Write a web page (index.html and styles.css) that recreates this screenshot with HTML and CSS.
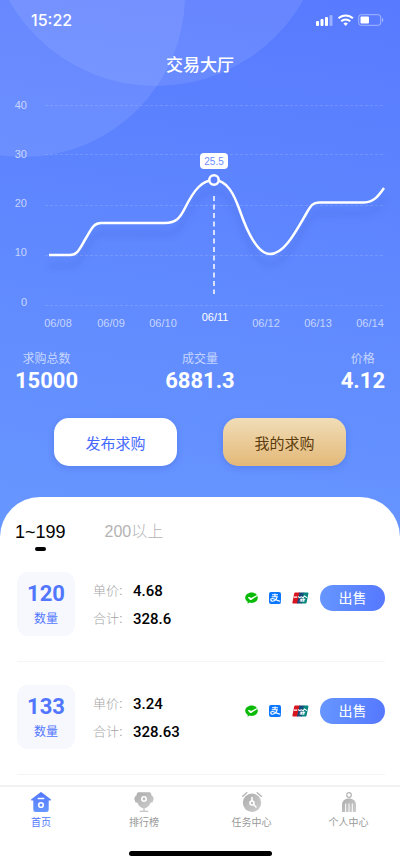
FILE: index.html
```html
<!DOCTYPE html>
<html lang="zh-CN">
<head>
<meta charset="utf-8">
<meta name="viewport" content="width=device-width, initial-scale=1">
<title>交易大厅</title>
<link rel="stylesheet" href="styles.css">
</head>
<body>
<svg class="defs" width="0" height="0" aria-hidden="true">
  <defs>
    <linearGradient id="blue" x1="0" y1="0" x2="0" y2="1"><stop offset="0" stop-color="#5377ff"/><stop offset="1" stop-color="#6797ff"/></linearGradient>
    <linearGradient id="gray" x1="0" y1="0" x2="1" y2="1"><stop offset="0" stop-color="#acacac"/><stop offset="1" stop-color="#cecece"/></linearGradient>
    <symbol id="wechat" viewBox="0 0 13 12">
      <path fill="#09bb07" d="M6.6.4C10 .4 12.800 2.700 12.800 5.700s-2.700 5.200-6.200 5.200c-.7 0-1.400-.1-2-.3L2.500 11.800l.3-1.900C1.200 8.900.2 7.400.2 5.700.2 2.700 3.100.4 6.600.4z"/>
      <path fill="#fff" d="M3.300 5.200c.3-.3.7-.3 1.100-.1l1.200.7c.3.200.6.200 1 0L12 3l.4.900-6.100 4c-.5.300-1 .3-1.400-.1L3.200 6.100c-.2-.3-.2-.6.100-.9z"/>
    </symbol>
    <symbol id="alipay" viewBox="0 0 12 12">
      <rect width="12" height="12" rx="2" fill="#0b77ff"/>
      <path d="M3 2.800h6M6 1.400v3.200M2.700 4.700h6.200M8.200 4.700C7.500 7 5.800 9.200 3.700 9.200 1.100 9.200 1.200 6.500 3.300 6.500 5.300 6.500 7 8.300 11.300 9.300" fill="none" stroke="#fff" stroke-width="1.100"/>
    </symbol>
    <symbol id="unionpay" viewBox="0 0 17 12">
      <path fill="#d8141f" d="M3.200.5h5L5.800 11.500H1.200Q.2 11.500.4 10.500L2.200 1.500Q2.400.5 3.200.5z"/>
      <path fill="#164a7a" d="M7.400.5h5L10 11.500H5z"/>
      <path fill="#078580" d="M11.700.5h4Q16.600.5 16.400 1.500L14.600 10.500Q14.400 11.500 13.500 11.500H9.300z"/>
      <path d="M1.700 5.100h3.500M6 4.400l1.500 1.200 2-.8 1.600 1 1.400-1.800 2.500 1.600M8.200 7.300h5M7.700 9h4.800M9.500 6.600l-.5 3M12 6.600l-.5 3" fill="none" stroke="#fff" stroke-width="1.100"/>
    </symbol>
  </defs>
</svg>

<header class="hero">
  <svg class="hero-art" width="310" height="160" viewBox="0 0 310 160" aria-hidden="true">
    <circle cx="156" cy="-83" r="169"/>
    <circle cx="23" cy="-5" r="162"/>
  </svg>

  <div class="status">
    <time>15:22</time>
    <svg width="68" height="14" viewBox="0 0 68 14" fill="#fff" aria-hidden="true">
      <rect x="0" y="8" width="3" height="5" rx="1"/><rect x="4.500" y="6" width="3" height="7" rx="1"/><rect x="9" y="4" width="3" height="9" rx="1"/><rect x="13.500" y="2" width="3" height="11" rx="1" opacity=".4"/>
      <g fill="none" stroke="#fff" stroke-width="2"><path d="M22.500 5.300a10.500 10.500 0 0 1 14.400 0"/><path d="M25.200 8.200a6.500 6.500 0 0 1 9 0"/></g>
      <path d="M27.500 10.600a3.300 3.300 0 0 1 4.400 0L29.700 13z"/>
      <rect x="42.700" y="1.700" width="22" height="10.600" rx="2.500" fill="none" stroke="#fff" opacity=".45"/>
      <rect x="44.500" y="3.500" width="8.500" height="7" rx="1"/><path d="M66 5v4q1.300-.6 1.300-2T66 5z" opacity=".5"/>
    </svg>
  </div>

  <h1>交易大厅</h1>

  <svg class="chart" viewBox="0 85 400 250" role="img" aria-label="价格走势">
    <g class="grid"><path d="M45 105.500H384M45 154.500H384M45 205.500H384M45 255.500H384M45 305.500H384"/></g>
    <g class="axis" text-anchor="end">
      <text x="27" y="109">40</text><text x="27" y="158">30</text><text x="27" y="207">20</text><text x="27" y="256">10</text><text x="27" y="306">0</text>
    </g>
    <path class="line" d="M49 255H70C78 255 80 248 86 238C92 228 94 223 101 223H165C176 223 180 218 185 208C194 190 202 180 214 180C227 180 234 194 240 211C248 234 258 254 270 254C284 254 295 233 306 214C311 205 313 202.500 319 202.500H364C374 202.500 379 195 384 188"/>
    <path class="marker" d="M214 196V294"/>
    <circle class="dot" cx="214" cy="180" r="4.700"/>
    <rect x="200" y="153" width="28" height="16" rx="4" fill="#fff"/>
    <text class="tip" x="214" y="165" text-anchor="middle">25.5</text>
    <g class="axis" text-anchor="middle">
      <text x="58" y="327">06/08</text><text x="111" y="327">06/09</text><text x="163" y="327">06/10</text>
      <text class="current" x="215" y="321">06/11</text>
      <text x="266" y="327">06/12</text><text x="318" y="327">06/13</text><text x="370" y="327">06/14</text>
    </g>
  </svg>

  <dl class="stats">
    <div><dt>求购总数</dt><dd>15000</dd></div>
    <div><dt>成交量</dt><dd>6881.3</dd></div>
    <div><dt>价格</dt><dd>4.12</dd></div>
  </dl>

  <div class="actions">
    <button type="button" class="action">发布求购</button>
    <button type="button" class="action gold">我的求购</button>
  </div>
</header>

<main class="sheet">
  <div class="tabs">
    <button type="button" class="tab active">1~199</button>
    <button type="button" class="tab">200以上</button>
  </div>
  <ul class="orders">
    <li class="order">
      <div class="amount"><strong>120</strong><span>数量</span></div>
      <dl class="prices"><dt>单价:</dt><dd>4.68</dd><dt>合计:</dt><dd>328.6</dd></dl>
      <div class="sale">
        <svg width="13" height="12" role="img" aria-label="微信支付"><use href="#wechat"/></svg>
        <svg width="12" height="12" role="img" aria-label="支付宝"><use href="#alipay"/></svg>
        <svg width="17" height="12" role="img" aria-label="银联"><use href="#unionpay"/></svg>
        <button type="button" class="sell">出售</button>
      </div>
    </li>
    <li class="order">
      <div class="amount"><strong>133</strong><span>数量</span></div>
      <dl class="prices"><dt>单价:</dt><dd>3.24</dd><dt>合计:</dt><dd>328.63</dd></dl>
      <div class="sale">
        <svg width="13" height="12" role="img" aria-label="微信支付"><use href="#wechat"/></svg>
        <svg width="12" height="12" role="img" aria-label="支付宝"><use href="#alipay"/></svg>
        <svg width="17" height="12" role="img" aria-label="银联"><use href="#unionpay"/></svg>
        <button type="button" class="sell">出售</button>
      </div>
    </li>
  </ul>
</main>

<nav class="tabbar">
  <div class="nav-items">
    <a href="#home" class="current">
      <svg width="22" height="20" viewBox="0 0 22 20" aria-hidden="true"><path fill="url(#blue)" d="M10.200.4q.8-.6 1.600 0L20.700 7.300q1 1-.3 1.300H18.700V17.500Q18.700 20 16.200 20H5.800Q3.300 20 3.300 17.500V8.600H1.600Q.3 8.300 1.300 7.300z"/><path d="M8.300 6.500h5.400" stroke="#fff" stroke-width="1.500" stroke-linecap="round"/><circle cx="11" cy="13" r="2.300" fill="none" stroke="#fff" stroke-width="1.600"/></svg>
      首页
    </a>
    <a href="#ranking">
      <svg width="22" height="20" viewBox="0 0 22 20" aria-hidden="true"><path fill="url(#gray)" d="M5.500.3H16.500Q17.800.3 18.200 2L18.600 3.700H19.300L20.800 6.500 19.500 10.500H17.800C16.500 13.500 14 16.300 11 16.300 8 16.300 5.500 13.500 4.200 10.500H2.500L1.200 6.500 2.700 3.700H3.400L3.800 2Q4.200.3 5.500.3z"/><path d="M11 15.500V19M6.700 19.300h8.600" stroke="#c5c5c5" stroke-width="1.300"/><circle cx="11" cy="7" r="2.200" fill="none" stroke="#fff" stroke-width="1.600"/></svg>
      排行榜
    </a>
    <a href="#tasks">
      <svg width="22" height="20" viewBox="0 0 22 20" aria-hidden="true"><circle cx="11" cy="10.800" r="9.200" fill="url(#gray)"/><path d="M1.700 4.300L5.800.7M20.300 4.300L16.200.7" stroke="#b5b5b5" stroke-width="1.400" stroke-linecap="round"/><path d="M11 5.500v4M12.500 12.500l2.500 2.500" stroke="#fff" stroke-width="1.600" stroke-linecap="round"/><circle cx="11" cy="11" r="2" fill="none" stroke="#fff" stroke-width="1.600"/></svg>
      任务中心
    </a>
    <a href="#profile">
      <svg width="22" height="20" viewBox="0 0 22 20" aria-hidden="true"><circle cx="11" cy="3" r="2.300" fill="none" stroke="#b3b3b3" stroke-width="1.200"/><path fill="url(#gray)" d="M4 19.500V13C4 8.800 7 6.500 11 6.500S18 8.800 18 13v6.500q0 .5-.5.500H4.500Q4 20 4 19.500z"/><path d="M7.700 11.500V20M11 11.500V20M14.300 11.500V20" stroke="#fff" stroke-width="1"/></svg>
      个人中心
    </a>
  </div>
  <div class="home-indicator"></div>
</nav>
</body>
</html>
```
FILE: styles.css
```css
* {
  box-sizing: border-box;
}

body {
  margin: 0;
  min-height: 100vh;
  display: flex;
  flex-direction: column;
  background: #fff;
  color: #000;
  font-family: "Liberation Sans", "Noto Sans CJK SC", sans-serif;
}

dl, dd, ul, h1 {
  margin: 0;
  padding: 0;
}

button {
  border: 0;
  padding: 0;
  font-family: inherit;
  cursor: pointer;
}

.defs {
  position: absolute;
}

.hero {
  position: relative;
  padding-bottom: 71px;
  background: linear-gradient(188deg, #587aff, #6797ff);
  color: #fff;
}

.hero > * {
  position: relative;
}

.hero > .hero-art {
  position: absolute;
  top: 0;
  left: 0;
  fill: rgba(255, 255, 255, 0.09);
}

.status {
  display: flex;
  justify-content: space-between;
  align-items: center;
  height: 40px;
  padding: 0 16px 0 31px;
  font: 500 16px/20px Inter, sans-serif;
}

h1 {
  height: 45px;
  padding-top: 13px;
  font-size: 17px;
  font-weight: 500;
  line-height: 26px;
  text-align: center;
}

.chart {
  display: block;
  width: 100%;
}

.grid {
  stroke: rgba(255, 255, 255, 0.14);
  stroke-dasharray: 3 2;
}

.axis {
  font-size: 11px;
  fill: rgba(255, 255, 255, 0.65);
}

.axis .current {
  fill: #fff;
}

.line {
  fill: none;
  stroke: #fff;
  stroke-width: 2.5;
  filter: drop-shadow(0 11px 3px rgba(50, 75, 190, 0.3));
}

.marker {
  stroke: #fff;
  stroke-width: 1.5;
  stroke-dasharray: 5 3.5;
}

.dot {
  fill: #5c80ff;
  stroke: #fff;
  stroke-width: 2.5;
}

.tip {
  font-size: 10px;
  fill: #6d8bff;
}

.stats {
  display: grid;
  grid-template-columns: 1fr auto 1fr;
  padding: 15px 15px 0;
  text-align: center;
}

.stats div:first-child {
  justify-self: start;
}

.stats div:last-child {
  justify-self: end;
}

.stats dt {
  font-size: 12px;
  line-height: 18px;
  color: rgba(255, 255, 255, 0.65);
}

.stats dd {
  font: 700 22px/26px Roboto, sans-serif;
}

.actions {
  display: flex;
  justify-content: space-between;
  padding: 24px 54px 0;
}

.action {
  width: 123px;
  height: 48px;
  border-radius: 15px;
  background: #fff;
  color: #4468ff;
  font-size: 15px;
  box-shadow: 0 2px 6px rgba(60, 90, 200, 0.3);
}

.action.gold {
  background: linear-gradient(#f1ddb7, #e3b878);
  color: #5c3c0c;
}

.sheet {
  position: relative;
  flex: 1;
  margin-top: -40px;
  padding: 24px 15px 0;
  border-radius: 40px 40px 0 0;
  background: #fff;
}

.tabs {
  display: flex;
  gap: 39px;
}

.tab {
  display: flex;
  flex-direction: column;
  align-items: center;
  height: 28px;
  background: none;
  color: #b3b3b3;
  font-size: 16px;
  font-weight: 300;
  line-height: 22px;
}

.tab.active {
  color: #000;
  font-size: 18px;
  font-weight: 400;
}

.tab.active::after {
  content: "";
  width: 11px;
  height: 4px;
  margin-top: 4px;
  border-radius: 2px;
  background: #000;
  flex: none;
}

.orders {
  list-style: none;
}

.order {
  display: flex;
  align-items: flex-start;
  margin-left: 2px;
  padding: 23px 0 25px;
  border-bottom: 1px solid #f5f5f5;
}

.amount {
  display: flex;
  flex-direction: column;
  align-items: center;
  width: 58px;
  height: 64px;
  padding-top: 9px;
  border-radius: 11px;
  background: #f7f8fd;
  color: #5277ff;
}

.amount strong {
  font: 700 22px/26px Roboto, sans-serif;
}

.amount span {
  font-size: 12px;
  line-height: 24px;
}

.prices {
  display: grid;
  grid-template-columns: 40px auto;
  margin: 5px 0 0 18px;
  line-height: 28px;
}

.prices dt {
  color: #a6a6a6;
  font-size: 13px;
  font-weight: 300;
}

.prices dd {
  font-family: Roboto, sans-serif;
  font-size: 15px;
  font-weight: 500;
}

.sale {
  display: flex;
  align-items: center;
  gap: 11px;
  margin: 13px 0 0 auto;
}

.sell {
  width: 65px;
  height: 26px;
  border-radius: 13px;
  background: linear-gradient(100deg, #6797ff, #5577ff);
  color: #fff;
  font-size: 14px;
  line-height: 26px;
}

.tabbar {
  border-top: 2px solid #f1f1f1;
  padding: 5px 0 9px;
  background: #fff;
}

.nav-items {
  display: grid;
  grid-template-columns: 82fr 124fr 91fr 103fr;
}

.nav-items a {
  display: flex;
  flex-direction: column;
  align-items: center;
  gap: 3px;
  color: #999;
  font-size: 10px;
  line-height: 16px;
  text-decoration: none;
}

.nav-items .current {
  color: #5277ff;
}

.home-indicator {
  width: 143px;
  height: 5px;
  margin: 20px auto 0;
  border-radius: 3px;
  background: #000;
}
```
